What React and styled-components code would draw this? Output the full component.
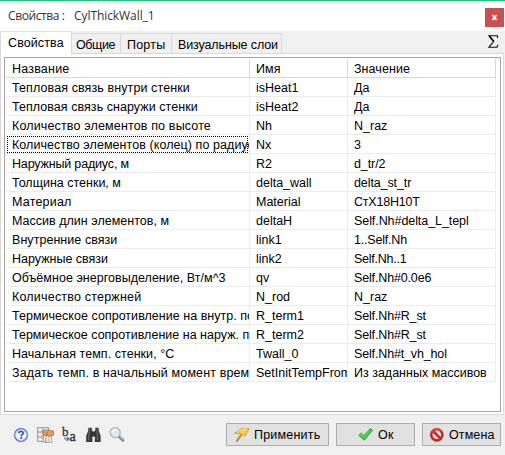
import React from 'react';
import styled, { createGlobalStyle } from 'styled-components';

const Global = createGlobalStyle`
  * { box-sizing: border-box; }
  body { margin: 0; background: #f0f0f0; }
`;

const Dialog = styled.div`
  width: 505px;
  height: 455px;
  display: flex;
  flex-direction: column;
  background: #f0f0f0;
  border-top: 1px solid #1fc877;
  font: 12.5px/16px "Liberation Sans", Arial, sans-serif;
  color: #000;
  overflow: hidden;
`;

const TitleBar = styled.header`
  height: 30px;
  flex: none;
  display: flex;
  align-items: center;
  padding: 0 1px 0 8px;
  background: #fff;
  font: 12px/16px "Open Sans", "Noto Sans", sans-serif;
  color: #333;
`;

const TitleLabel = styled.span`
  width: 66px;
  white-space: nowrap;
  letter-spacing: ${(p) => p.$track || 0}px;
`;

const CloseButton = styled.button`
  width: 19px;
  height: 19px;
  margin: 2px 0 0 auto;
  padding: 0;
  display: flex;
  align-items: center;
  justify-content: center;
  border: 0;
  background: #c75050;
`;

const TabBar = styled.nav`
  height: 23px;
  flex: none;
  display: flex;
  align-items: flex-end;
`;

const Tab = styled.div`
  width: ${(p) => p.$width}px;
  height: ${(p) => (p.$active ? 23 : 21)}px;
  padding: 3px 0 0 ${(p) => p.$pad}px;
  border: 1px solid #d9d9d9;
  border-bottom: ${(p) => (p.$active ? '0' : '1px solid #d9d9d9')};
  border-left-width: ${(p) => (p.$active ? 1 : 0)}px;
  border-top-color: ${(p) => (p.$active ? '#e2e2e2' : '#d9d9d9')};
  background: ${(p) => (p.$active ? '#fff' : '#f0f0f0')};
  letter-spacing: ${(p) => p.$track}px;
  white-space: nowrap;
`;

const TabFiller = styled.div`
  flex: 1;
  height: 23px;
  display: flex;
  justify-content: flex-end;
  padding: 4px 5px 0 0;
  margin-right: 1px;
  border-bottom: 1px solid #d9d9d9;
`;

const Panel = styled.main`
  height: 361px;
  flex: none;
  margin-right: 1px;
  padding: 3px 2px 2px 3px;
  background: #fff;
  border: 1px solid #d9d9d9;
  border-top: 0;
`;

const Table = styled.div`
  height: 355px;
  padding: 1px 0 0 1px;
  border: 1px solid #a5a5a5;
`;

const Row = styled.div`
  display: grid;
  grid-template-columns: 244px 98px 148px;
  height: 19px;
`;

const Cell = styled.div`
  position: relative;
  min-width: 0;
  padding: 2px 0 0 6px;
  border-right: 1px solid ${(p) => (p.$head ? '#d8d8d8' : '#ececec')};
  border-bottom: 1px solid ${(p) => (p.$head ? '#d8d8d8' : '#ececec')};
  overflow: hidden;
  white-space: nowrap;
  letter-spacing: ${(p) => p.$track}px;
`;

const FocusRing = styled.div`
  position: absolute;
  inset: 1px 1px 0 1px;
  border: 1px dotted #000;
`;

const Footer = styled.footer`
  flex: 1;
  display: flex;
  align-items: flex-start;
  padding: 8px 4px 0 14px;
`;

const Tools = styled.div`
  display: flex;
  gap: 8px;
  padding-top: 4px;
  svg { overflow: visible; }
`;

const Actions = styled.div`
  display: flex;
  gap: 7px;
  margin-left: auto;
`;

const Button = styled.button`
  width: ${(p) => p.$width}px;
  height: 23px;
  display: flex;
  align-items: center;
  gap: 4px;
  padding: 0 0 0 ${(p) => p.$pad}px;
  border: 1px solid #adadad;
  background: #e1e1e1;
  color: #000;
  font: 12.5px/16px "Liberation Sans", Arial, sans-serif;
  letter-spacing: ${(p) => p.$track}px;
  white-space: nowrap;
  svg { flex: none; }
`;

// Each cell is [text, letter spacing in px].
const rows = [
  [['Тепловая связь внутри стенки', 0.1], ['isHeat1', 0], ['Да', 0]],
  [['Тепловая связь снаружи стенки', 0.05], ['isHeat2', 0], ['Да', 0]],
  [['Количество элементов по высоте', 0.15], ['Nh', 0], ['N_raz', 0]],
  [['Количество элементов (колец) по радиус', 0.07], ['Nx', 0], ['3', 0]],
  [['Наружный радиус, м', -0.17], ['R2', 0], ['d_tr/2', -0.1]],
  [['Толщина стенки, м', 0], ['delta_wall', 0], ['delta_st_tr', -0.1]],
  [['Материал', 0.2], ['Material', 0], ['СтХ18Н10Т', -0.2]],
  [['Массив длин элементов, м', 0.02], ['deltaH', 0], ['Self.Nh#delta_L_tepl', -0.07]],
  [['Внутренние связи', 0.05], ['link1', 0], ['1..Self.Nh', -0.2]],
  [['Наружные связи', 0], ['link2', 0], ['Self.Nh..1', -0.25]],
  [['Объёмное энерговыделение, Вт/м^3', 0.03], ['qv', 0], ['Self.Nh#0.0e6', -0.15]],
  [['Количество стержней', 0.2], ['N_rod', 0], ['N_raz', 0]],
  [['Термическое сопротивление на внутр. по', 0.03], ['R_term1', 0], ['Self.Nh#R_st', -0.15]],
  [['Термическое сопротивление на наруж. п', 0.01], ['R_term2', 0], ['Self.Nh#R_st', -0.15]],
  [['Начальная темп. стенки, °C', 0.05], ['Twall_0', 0], ['Self.Nh#t_vh_hol', -0.15]],
  [['Задать темп. в начальный момент врем', 0.13], ['SetInitTempFrom', 0], ['Из заданных массивов', 0]],
];

const HelpIcon = () => (
  <svg width="16" height="16" viewBox="0 0 16 16">
    <circle cx="7" cy="8" r="6.4" fill="#f4f7fd" stroke="#4568c4" strokeWidth="1.2" />
    <circle cx="7" cy="8" r="5.3" fill="none" stroke="#c4d1f0" strokeWidth="0.9" />
    <path d="M4.9 6.3C4.9 3.8 9.2 3.8 9.2 6.2C9.2 7.7 7.2 7.6 7.2 9.2" fill="none" stroke="#2c4fc0" strokeWidth="1.7" />
    <rect x="6.3" y="10" width="1.8" height="1.8" fill="#2c4fc0" />
  </svg>
);

const PropertiesIcon = () => (
  <svg width="16" height="16" viewBox="0 0 16 16">
    <rect x="-0.5" y="0.5" width="11" height="14" fill="#dedede" stroke="#a3a3a3" />
    <path d="M0 5H10M0 10H6M5 0.5V14.5" stroke="#a0a0a0" />
    <path d="M1 3H3.5M6.5 3H9M1 7.5H3M1 12.5H3.5" stroke="#fff" />
    <rect x="5.5" y="7.5" width="8" height="8" fill="#fff" stroke="#aaa" />
    <path d="M9.5 12H12M9.5 14H12" stroke="#999" />
    <rect x="7" y="11" width="1.5" height="1.5" fill="#3da63f" />
    <rect x="7" y="13.3" width="1.5" height="1.5" fill="#df4343" />
    <path d="M3.8 5L6.2 3.2L11 3L15.6 4.3V8L12.6 9L10.6 10L9.8 8.6L8 9.8L7.5 8L5 8.4L5.8 6.7Z" fill="#dda062" stroke="#b87536" strokeWidth="0.9" />
    <path d="M7.5 6.4L10 5.4M8.2 8.2L10.2 7" stroke="#a7642f" strokeWidth="0.7" />
  </svg>
);

const RenameIcon = () => (
  <svg width="16" height="16" viewBox="0 0 16 16">
    <text x="0" y="9" fontFamily="Liberation Serif, serif" fontSize="13" fill="#333" stroke="#333" strokeWidth="0.3">b</text>
    <text x="7.5" y="14" fontFamily="Liberation Serif, serif" fontSize="14" fill="#333" stroke="#333" strokeWidth="0.4">a</text>
    <path d="M3 10.2V12H6.2M4.8 10L7 12L4.8 14" fill="none" stroke="#406cc7" strokeWidth="1.1" />
  </svg>
);

const BinocularsIcon = () => (
  <svg width="16" height="16" viewBox="0 0 16 16">
    <path d="M2.4 0.7H5.8V3L6.8 4.5H8.4L9.4 3V0.7H12.6V3.2L14.6 9V15H8.8V9.5H6.4V15H0.2V9L2.4 3.2Z" fill="#343434" />
    <path d="M3.9 3.5L2.5 9.5V13.5M11 3.5L11.4 9.5V13.5" fill="none" stroke="#777" strokeWidth="1.1" />
    <path d="M2.6 2.5H5.6M9.6 2.5H12.5M0.4 11H6.2M9 11H14.5" stroke="#555" />
  </svg>
);

const LensIcon = () => (
  <svg width="16" height="16" viewBox="0 0 16 16">
    <path d="M9 9.4L13 13.3" stroke="#8b8b8b" strokeWidth="3" strokeLinecap="round" />
    <path d="M9.6 9.2L13.2 12.7" stroke="#d0d0d0" strokeWidth="1" />
    <circle cx="5.2" cy="5.6" r="5" fill="#d9ecf8" stroke="#a6b4bf" strokeWidth="1.3" />
    <path d="M2.2 5.6A3 3 0 0 1 6.2 2.6" fill="none" stroke="#fff" strokeWidth="1.4" />
  </svg>
);

const ApplyIcon = () => (
  <svg width="16" height="16" viewBox="0 0 16 16">
    <path d="M7.4 7.5L2.5 14.5" stroke="#a96b26" strokeWidth="2" />
    <path d="M7.2 7.7L2.6 14" stroke="#e7ad55" strokeWidth="0.8" />
    <path d="M0.8 6.2L8.2 1.2L10.3 2.2L15.4 1.6L10.8 9.2L8.4 8L6.2 6.5Z" fill="#f6cb45" stroke="#d69a24" strokeWidth="0.9" />
    <path d="M4 5.3L8.3 2.5L13 2.7" fill="none" stroke="#ffe98a" />
  </svg>
);

const CheckIcon = () => (
  <svg width="16" height="16" viewBox="0 0 16 16">
    <path d="M0.8 8.4L3.4 5.9L6 8.6L12.2 1.6L14.5 3.2L6.4 13.2Z" fill="#3bc74b" stroke="#239534" strokeWidth="0.8" />
    <path d="M2.2 8.2L3.4 7.1L6.1 10L12.3 3" fill="none" stroke="#83e582" strokeWidth="0.8" />
  </svg>
);

const CancelIcon = () => (
  <svg width="16" height="16" viewBox="0 0 16 16">
    <circle cx="7.8" cy="7.8" r="5.6" fill="#e8e2e2" stroke="#c4282c" strokeWidth="2.6" />
    <path d="M4 4L11.8 11.8" stroke="#c4282c" strokeWidth="2.6" />
    <path d="M2.6 5.8A5.6 5.6 0 0 1 11.7 3.7" fill="none" stroke="#e76d6b" strokeWidth="0.9" />
  </svg>
);

const SigmaIcon = () => (
  <svg width="12" height="14" viewBox="0 0 12 14">
    <path d="M10.5 3V.8H2L6.6 6.5L1.8 12.3H10L11 9.8" fill="none" stroke="#111" strokeWidth="1.1" />
    <path d="M2.3 1L6.8 6.5" stroke="#111" strokeWidth="1.8" />
  </svg>
);

const CloseIcon = () => (
  <svg width="7" height="7" viewBox="0 0 7 7">
    <path d="M1.4 1L5.6 6M5.6 1L1.4 6" stroke="#fff" strokeWidth="1.9" />
  </svg>
);

const headers = [['Название', 0.2], ['Имя', 0.1], ['Значение', 0.07]];

export default function App() {
  return (
    <>
      <Global />
      <Dialog>
        <TitleBar>
          <TitleLabel $track={-0.4}>Свойства :</TitleLabel>
          <TitleLabel $track={-0.07}>CylThickWall_1</TitleLabel>
          <CloseButton aria-label="Закрыть"><CloseIcon /></CloseButton>
        </TitleBar>
        <TabBar>
          <Tab $active $width={72} $pad={7} $track={0.1}>Свойства</Tab>
          <Tab $width={49} $pad={4} $track={-0.4}>Общие</Tab>
          <Tab $width={51} $pad={6} $track={0.2}>Порты</Tab>
          <Tab $width={110} $pad={6} $track={-0.12}>Визуальные слои</Tab>
          <TabFiller><SigmaIcon /></TabFiller>
        </TabBar>
        <Panel>
          <Table>
            <Row>
              {headers.map(([text, track]) => <Cell key={text} $head $track={track}>{text}</Cell>)}
            </Row>
            {rows.map((row, i) => (
              <Row key={row[1][0]}>
                {row.map(([text, track], j) => (
                  <Cell key={j} $track={track}>
                    {text}
                    {i === 3 && j === 0 && <FocusRing />}
                  </Cell>
                ))}
              </Row>
            ))}
          </Table>
        </Panel>
        <Footer>
          <Tools>
            <HelpIcon /><PropertiesIcon /><RenameIcon /><BinocularsIcon /><LensIcon />
          </Tools>
          <Actions>
            <Button $width={103} $pad={7} $track={0.2}><ApplyIcon />Применить</Button>
            <Button $width={79} $pad={21} $track={0.2}><CheckIcon />Ок</Button>
            <Button $width={79} $pad={6} $track={0.1}><CancelIcon />Отмена</Button>
          </Actions>
        </Footer>
      </Dialog>
    </>
  );
}
